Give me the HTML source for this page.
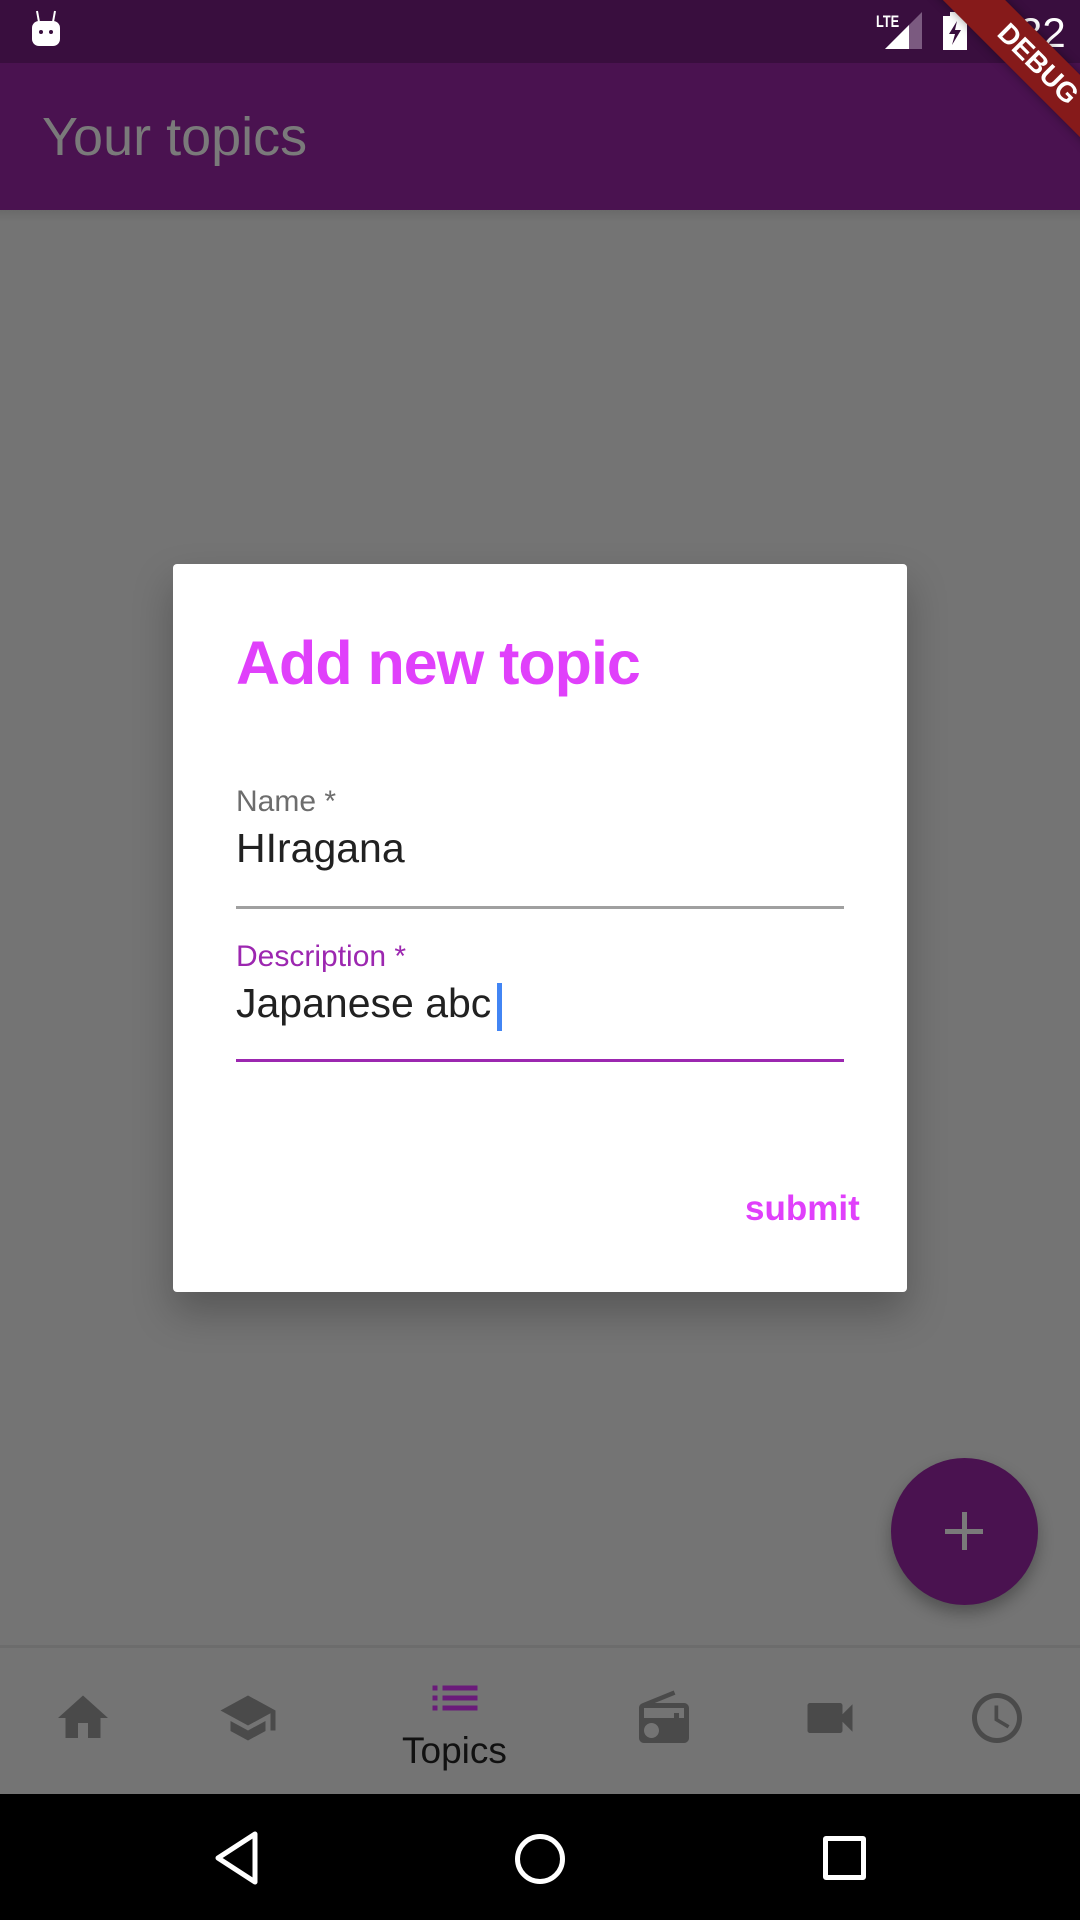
<!DOCTYPE html>
<html><head><meta charset="utf-8"><style>
html,body{margin:0;padding:0;width:1080px;height:1920px;overflow:hidden;background:#747474;font-family:"Liberation Sans",Roboto,sans-serif;}
.abs{position:absolute;}
</style></head><body>
<div class="abs" style="left:0;top:0;width:1080px;height:63px;background:#390e3e;"></div>
<div class="abs" style="left:0;top:63px;width:1080px;height:147px;background:#4a1250;"></div>
<div class="abs" style="left:0;top:210px;width:1080px;height:12px;background:linear-gradient(#6a6a6a,#747474);"></div>
<svg class="abs" style="left:30px;top:10px" width="34" height="38" viewBox="0 0 34 38"><rect x="2" y="11" width="28" height="25" rx="7" fill="#fff"/><line x1="7" y1="1" x2="9" y2="12" stroke="#fff" stroke-width="2"/><line x1="25" y1="1" x2="23" y2="12" stroke="#fff" stroke-width="2"/><circle cx="11" cy="22" r="2" fill="#390e3e"/><circle cx="21" cy="22" r="2" fill="#390e3e"/></svg>
<div class="abs" style="left:876px;top:12px;color:#fff;font-size:17px;font-weight:bold;transform:scaleX(.75);transform-origin:left;">LTE</div>
<svg class="abs" style="left:885px;top:12px" width="38" height="38" viewBox="0 0 38 38"><polygon points="0,37 37,0 37,37" fill="#7b5a80"/><polygon points="0,37 24,13 24,37" fill="#fff"/></svg>
<svg class="abs" style="left:943px;top:12px" width="24" height="38" viewBox="0 0 24 38"><rect x="7" y="0" width="10" height="4" fill="#fff"/><rect x="0" y="4" width="24" height="34" fill="#fff"/><polygon points="14,9 6,22 12,22 9,33 18,18 12,18" fill="#390e3e"/></svg>
<div class="abs" style="left:984px;top:9px;color:#fff;font-size:42px;">6:32</div>
<div class="abs" style="left:888px;top:42px;width:300px;height:44px;background:#861a1a;transform:rotate(45deg);color:#fff;font-weight:bold;font-size:28px;text-align:center;line-height:44px;box-shadow:0 0 10px rgba(0,0,0,.4);">DEBUG</div>
<div class="abs" style="left:42px;top:106px;color:#7a7a7a;font-size:54px;">Your topics</div>
<div class="abs" style="left:173px;top:564px;width:734px;height:728px;background:#fff;border-radius:4px;box-shadow:0 20px 40px rgba(0,0,0,.25);"></div>
<div class="abs" style="left:236px;top:628px;color:#e040fb;font-size:61px;font-weight:bold;letter-spacing:-1px;">Add new topic</div>
<div class="abs" style="left:236px;top:785px;color:#6d6d6d;font-size:30px;">Name *</div>
<div class="abs" style="left:236px;top:825px;color:#212121;font-size:41px;">HIragana</div>
<div class="abs" style="left:236px;top:906px;width:608px;height:3px;background:#a0a0a0;"></div>
<div class="abs" style="left:236px;top:940px;color:#9c27b0;font-size:30px;">Description *</div>
<div class="abs" style="left:236px;top:980px;color:#212121;font-size:41px;">Japanese abc</div>
<div class="abs" style="left:497px;top:983px;width:5px;height:48px;background:#4285f4;"></div>
<div class="abs" style="left:236px;top:1059px;width:608px;height:3px;background:#9c27b0;"></div>
<div class="abs" style="left:745px;top:1189px;color:#e040fb;font-size:35px;font-weight:bold;">submit</div>
<div class="abs" style="left:891px;top:1458px;width:147px;height:147px;border-radius:50%;background:#4a1250;box-shadow:0 8px 16px rgba(0,0,0,.3);"></div>
<div class="abs" style="left:945px;top:1529px;width:38px;height:5px;background:#7a7a7a;"></div>
<div class="abs" style="left:962px;top:1512px;width:5px;height:38px;background:#7a7a7a;"></div>
<div class="abs" style="left:0;top:1645px;width:1080px;height:149px;background:#747474;border-top:3px solid #6c6c6c;"></div>
<svg class="abs" style="left:53px;top:1688px" width="60" height="60" viewBox="0 0 24 24"><path fill="#4a4a4a" d="M10 20v-6h4v6h5v-8h3L12 3 2 12h3v8z"/></svg>
<svg class="abs" style="left:218px;top:1688px" width="60" height="60" viewBox="0 0 24 24"><path fill="#4a4a4a" d="M5 13.18v4L12 21l7-3.82v-4L12 17l-7-3.82zM12 3L1 9l11 6 9-4.91V17h2V9L12 3z"/></svg>
<svg class="abs" style="left:425px;top:1668px" width="60" height="60" viewBox="0 0 24 24"><path fill="#6a1b7a" d="M3 13h2v-2H3v2zm0 4h2v-2H3v2zm0-8h2V7H3v2zm4 4h14v-2H7v2zm0 4h14v-2H7v2zM7 7v2h14V7H7z"/></svg>
<div class="abs" style="left:402px;top:1730px;color:#111;font-size:37px;">Topics</div>
<svg class="abs" style="left:634px;top:1688px" width="60" height="60" viewBox="0 0 24 24"><path fill="#4a4a4a" d="M3.24 6.15C2.51 6.43 2 7.170 2 8v12c0 1.1.89 2 2 2h16c1.11 0 2-.9 2-2V8c0-1.11-.89-2-2-2H8.3l8.26-3.34L15.88 1 3.24 6.15zM7 20c-1.66 0-3-1.34-3-3s1.34-3 3-3 3 1.34 3 3-1.340 3-3 3zm13-8h-2v-2h-2v2H4V8h16v4z"/></svg>
<svg class="abs" style="left:800px;top:1688px" width="60" height="60" viewBox="0 0 24 24"><path fill="#4a4a4a" d="M17 10.5V7c0-.55-.45-1-1-1H4c-.55 0-1 .45-1 1v10c0 .55.45 1 1 1h12c.55 0 1-.45 1-1v-3.5l4 4v-11l-4 4z"/></svg>
<svg class="abs" style="left:967px;top:1688px" width="60" height="60" viewBox="0 0 24 24"><path fill="#4a4a4a" d="M11.99 2C6.47 2 2 6.48 2 12s4.47 10 9.990 10C17.52 22 22 17.52 22 12S17.52 2 11.99 2zM12 20c-4.42 0-8-3.58-8-8s3.58-8 8-8 8 3.58 8 8-3.58 8-8 8zm.5-13H11v6l5.25 3.15.75-1.23-4.5-2.67z"/></svg>
<div class="abs" style="left:0;top:1794px;width:1080px;height:126px;background:#000;"></div>
<svg class="abs" style="left:210px;top:1830px" width="54" height="56" viewBox="0 0 54 56"><path d="M45 4 L8 28 L45 52 Z" fill="none" stroke="#fff" stroke-width="5" stroke-linejoin="round"/></svg>
<div class="abs" style="left:515px;top:1834px;width:40px;height:40px;border:5px solid #fff;border-radius:50%;"></div>
<div class="abs" style="left:823px;top:1836px;width:33px;height:34px;border:5px solid #fff;border-radius:3px;"></div>
</body></html>
